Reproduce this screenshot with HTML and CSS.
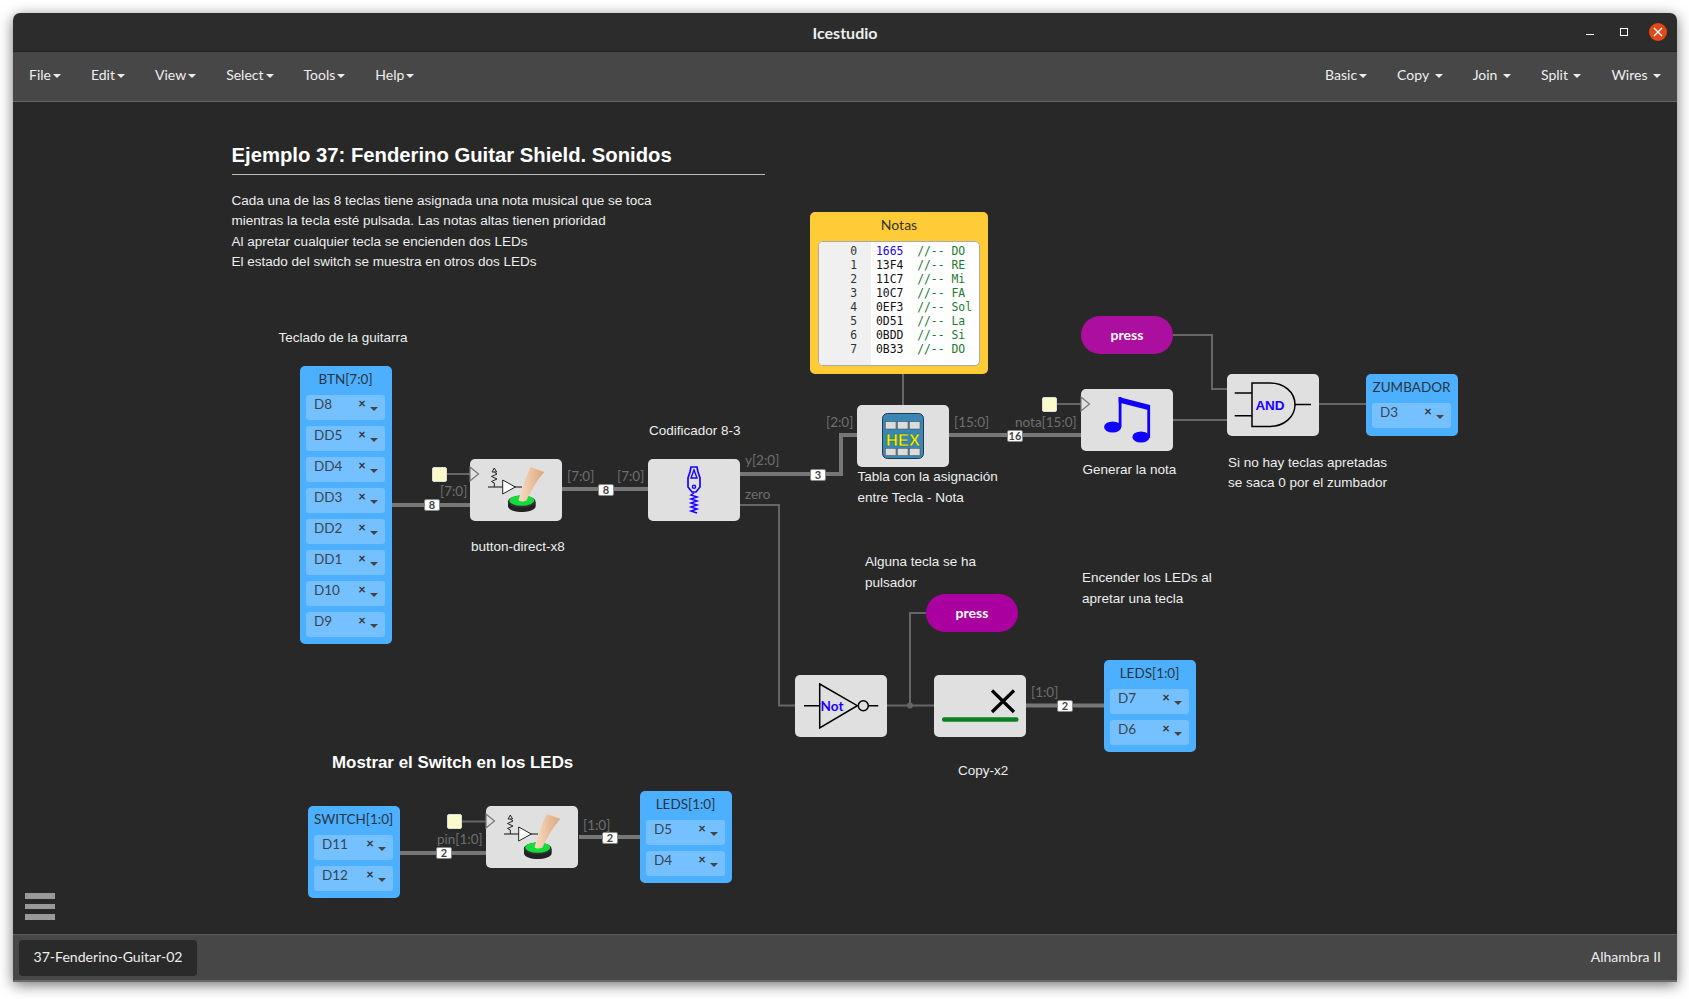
FILE: index.html
```html
<!DOCTYPE html>
<html lang="en">
<head>
  <meta charset="UTF-8">
  <title>Icestudio</title>
  <link rel="stylesheet" href="styles.css">
</head>
<body>
  <div class="window">
    <header class="titlebar">
      <span class="app-title">Icestudio</span>
      <div class="win-controls">
        <span class="win-min"></span>
        <span class="win-max"></span>
        <span class="win-close">
          <svg width="10" height="10" viewBox="0 0 10 10"><path d="M1 1L9 9M9 1L1 9" stroke="#fff" stroke-width="1.4"/></svg>
        </span>
      </div>
    </header>

    <nav class="menubar">
      <ul class="menu">
        <li>File<i class="caret"></i></li>
        <li>Edit<i class="caret"></i></li>
        <li>View<i class="caret"></i></li>
        <li>Select<i class="caret"></i></li>
        <li>Tools<i class="caret"></i></li>
        <li>Help<i class="caret"></i></li>
      </ul>
      <ul class="menu menu-right">
        <li>Basic<i class="caret"></i></li>
        <li>Copy<i class="caret wide"></i></li>
        <li>Join<i class="caret wide"></i></li>
        <li>Split<i class="caret wide"></i></li>
        <li>Wires<i class="caret wide"></i></li>
      </ul>
    </nav>

    <main class="canvas">
      <!-- wires use page coordinates, hence the viewBox offset -->
      <svg class="wires" viewBox="13 102 1664 832">
        <path class="bus" d="M392 505H470M562 489H648M740 474H841V435H857M949 435H1081M1026 705.5H1104M400 853H486M579 837H640"/>
        <path class="net" d="M447 474H470M740 505H779V705.5H795M887 705.5H934M910 705.5V613H926M903 374V405M1057 404H1081M1173 335H1212V389H1227M1173 420H1227M1319 404H1366M462 821.5H486"/>
        <circle cx="910" cy="705.5" r="3" fill="#666"/>
      </svg>

      <div class="intro">
        <h2>Ejemplo 37: Fenderino Guitar Shield. Sonidos</h2>
        <p>Cada una de las 8 teclas tiene asignada una nota musical que se toca<br>
        mientras la tecla esté pulsada. Las notas altas tienen prioridad<br>
        Al apretar cualquier tecla se encienden dos LEDs<br>
        El estado del switch se muestra en otros dos LEDs</p>
      </div>

      <div class="note note-teclado">Teclado de la guitarra</div>
      <div class="note note-button">button-direct-x8</div>
      <div class="note note-codif">Codificador 8-3</div>
      <div class="note note-tabla">Tabla con la asignación<br>entre Tecla - Nota</div>
      <div class="note note-generar">Generar la nota</div>
      <div class="note note-si">Si no hay teclas apretadas<br>se saca 0 por el zumbador</div>
      <div class="note note-alguna">Alguna tecla se ha<br>pulsador</div>
      <div class="note note-encender">Encender los LEDs al<br>apretar una tecla</div>
      <div class="note note-copy">Copy-x2</div>
      <h3 class="note-mostrar">Mostrar el Switch en los LEDs</h3>

      <!-- input / output pins -->
      <div class="pins pins-btn">
        <div class="pins-name">BTN[7:0]</div>
        <div class="pin"><span>D8</span><b>×</b><i class="caret"></i></div>
        <div class="pin"><span>DD5</span><b>×</b><i class="caret"></i></div>
        <div class="pin"><span>DD4</span><b>×</b><i class="caret"></i></div>
        <div class="pin"><span>DD3</span><b>×</b><i class="caret"></i></div>
        <div class="pin"><span>DD2</span><b>×</b><i class="caret"></i></div>
        <div class="pin"><span>DD1</span><b>×</b><i class="caret"></i></div>
        <div class="pin"><span>D10</span><b>×</b><i class="caret"></i></div>
        <div class="pin"><span>D9</span><b>×</b><i class="caret"></i></div>
      </div>
      <div class="pins pins-zumbador">
        <div class="pins-name">ZUMBADOR</div>
        <div class="pin"><span>D3</span><b>×</b><i class="caret"></i></div>
      </div>
      <div class="pins pins-leds">
        <div class="pins-name">LEDS[1:0]</div>
        <div class="pin"><span>D7</span><b>×</b><i class="caret"></i></div>
        <div class="pin"><span>D6</span><b>×</b><i class="caret"></i></div>
      </div>
      <div class="pins pins-switch">
        <div class="pins-name">SWITCH[1:0]</div>
        <div class="pin"><span>D11</span><b>×</b><i class="caret"></i></div>
        <div class="pin"><span>D12</span><b>×</b><i class="caret"></i></div>
      </div>
      <div class="pins pins-leds2">
        <div class="pins-name">LEDS[1:0]</div>
        <div class="pin"><span>D5</span><b>×</b><i class="caret"></i></div>
        <div class="pin"><span>D4</span><b>×</b><i class="caret"></i></div>
      </div>

      <!-- memory block -->
      <div class="memory">
        <div class="memory-name">Notas</div>
        <div class="editor">
          <pre class="gutter">0
1
2
3
4
5
6
7</pre>
          <pre class="code"><span class="num">1665</span>  <span class="cmt">//-- DO</span>
13F4  <span class="cmt">//-- RE</span>
11C7  <span class="cmt">//-- Mi</span>
10C7  <span class="cmt">//-- FA</span>
0EF3  <span class="cmt">//-- Sol</span>
0D51  <span class="cmt">//-- La</span>
0BDD  <span class="cmt">//-- Si</span>
0B33  <span class="cmt">//-- DO</span></pre>
        </div>
      </div>

      <!-- clocks -->
      <div class="clock clock-a"></div>
      <div class="clock clock-b"></div>
      <div class="clock clock-c"></div>

      <!-- logic blocks -->
      <div class="block block-button">
        <svg viewBox="0 0 92 62">
          <defs>
            <linearGradient id="skin" x1="0" y1="0" x2="1" y2="0">
              <stop offset="0" stop-color="#f8dcc0"/>
              <stop offset="1" stop-color="#dca67e"/>
            </linearGradient>
            <g id="button-icon">
              <polygon class="clk" points="0,8 8.5,15 0,22"/>
              <path d="M18 28H52" stroke="#555" stroke-width="1.6"/>
              <path d="M24.3 13L22 13L24.3 9L26.6 13L24.3 13L27 15L21.5 17.5L27 20L21.5 22.5L24.3 24V28" fill="none" stroke="#222" stroke-width="1"/>
              <polygon points="32.7,21 45.3,28 32.7,35" fill="#fff" stroke="#222" stroke-width="1"/>
              <path d="M38 43V47C38 51 45 53 51.7 53C58 53 65.7 51 65.7 47V43Z" fill="#222"/>
              <ellipse cx="51.7" cy="42.5" rx="13.8" ry="6" fill="#333"/>
              <ellipse cx="51.7" cy="41.5" rx="12.4" ry="5.2" fill="#12dd3a"/>
              <path d="M48.5 41C52 30 56 18 60.7 8L74.3 13C68 20 62 30 56.5 41.5C54 43 50 43 48.5 41Z" fill="url(#skin)"/>
            </g>
          </defs>
          <use href="#button-icon"/>
        </svg>
      </div>

      <div class="block block-encoder">
        <svg viewBox="0 0 92 62" fill="none" stroke="#1a00ff">
          <path d="M43 8H49L50 13L52 19V28L48 33H44L40 28V19L42 13Z" stroke-width="1.7"/>
          <path d="M43 19L46 11L49 19Z" stroke-width="1.4"/>
          <circle cx="46" cy="27.7" r="1.6" stroke-width="1.4"/>
          <path d="M46 34L43 36L49 38L43 40L49 42L43 44L49 46L43 48L49 50L43 52L49 54" stroke-width="1.5"/>
        </svg>
      </div>

      <div class="block block-hex">
        <svg viewBox="0 0 92 62">
          <rect x="25.5" y="8.5" width="41" height="45" rx="5" fill="#3a87b5" stroke="#1f3a4a"/>
          <g fill="#dcdcdc" stroke="#444" stroke-width=".5">
            <rect x="28.3" y="16.7" width="10.7" height="7.3"/>
            <rect x="40.3" y="16.7" width="10.7" height="7.3"/>
            <rect x="52.3" y="16.7" width="10.7" height="7.3"/>
            <rect x="28.3" y="43.3" width="10.7" height="7.3"/>
            <rect x="40.3" y="43.3" width="10.7" height="7.3"/>
            <rect x="52.3" y="43.3" width="10.7" height="7.3"/>
          </g>
          <text class="hex-text" x="46" y="40.5">HEX</text>
        </svg>
      </div>

      <div class="block block-note">
        <svg viewBox="0 0 92 62" fill="#1000ff">
          <polygon class="clk" points="0,8 8.5,15 0,22"/>
          <ellipse cx="31.7" cy="38" rx="8.6" ry="5.6"/>
          <ellipse cx="60" cy="48" rx="8.6" ry="5.6"/>
          <rect x="37.7" y="8" width="2.8" height="30"/>
          <rect x="66.3" y="16" width="2.8" height="33"/>
          <polygon points="37.7,8 69,16 69,21.5 37.7,13.4"/>
        </svg>
      </div>

      <div class="block block-and">
        <svg viewBox="0 0 92 62" fill="none" stroke="#000" stroke-width="1.5">
          <path d="M25 9H43C57 9 68 18 68 30.5C68 43 57 52.5 43 52.5H25Z"/>
          <path d="M7.7 19H25M7.7 41.7H25M68 30.5H84"/>
          <text class="gate-text" x="43" y="35.5">AND</text>
        </svg>
      </div>

      <div class="block block-not">
        <svg viewBox="0 0 92 62" fill="none" stroke="#000" stroke-width="1.5">
          <polygon points="24.7,9 62.3,30.7 24.7,53"/>
          <circle cx="68.3" cy="30.7" r="5"/>
          <path d="M9 30.7H24.7M73.3 30.7H83.3"/>
          <text class="gate-text gate-not" x="37" y="35.5">Not</text>
        </svg>
      </div>

      <div class="block block-copy">
        <svg viewBox="0 0 92 62">
          <path d="M58 15.5L80 37M80 15.5L58 37" stroke="#000" stroke-width="3.2"/>
          <rect x="8" y="42.3" width="76.5" height="4.4" rx="2" fill="#0a8020"/>
        </svg>
      </div>

      <div class="block block-button2">
        <svg viewBox="0 0 92 62"><use href="#button-icon"/></svg>
      </div>

      <div class="press press-a">press</div>
      <div class="press press-b">press</div>

      <!-- wire labels -->
      <span class="port p1">[7:0]</span>
      <span class="port p2">[7:0]</span>
      <span class="port p3">[7:0]</span>
      <span class="port p4">y[2:0]</span>
      <span class="port p5">zero</span>
      <span class="port p6">[2:0]</span>
      <span class="port p7">[15:0]</span>
      <span class="port p8">nota[15:0]</span>
      <span class="port p9">[1:0]</span>
      <span class="port p10">pin[1:0]</span>
      <span class="port p11">[1:0]</span>

      <span class="size s1">8</span>
      <span class="size s2">8</span>
      <span class="size s3">3</span>
      <span class="size s4">16</span>
      <span class="size s5">2</span>
      <span class="size s6">2</span>
      <span class="size s7">2</span>

      <div class="hamburger"><span></span><span></span><span></span></div>
    </main>

    <footer class="statusbar">
      <div class="tab">37-Fenderino-Guitar-02</div>
      <div class="board-name">Alhambra II</div>
    </footer>
  </div>
</body>
</html>
```

FILE: styles.css
```css
* {
  box-sizing: border-box;
}

html, body {
  margin: 0;
  height: 999px;
  overflow: hidden;
}

body {
  background: #fff;
  padding: 13px 12px 17px 13px;
  font-family: Lato, sans-serif;
  font-size: 14px;
}

.window {
  height: 100%;
  display: flex;
  flex-direction: column;
  border-radius: 7px 7px 0 0;
  overflow: hidden;
  box-shadow: 0 3px 14px rgba(0, 0, 0, 0.55);
}

/* title bar */
.titlebar {
  height: 38px;
  background: #2c2c2c;
  display: flex;
  align-items: center;
  justify-content: center;
  position: relative;
  color: #eee;
}

.app-title {
  font-weight: bold;
  font-size: 16px;
}

.win-controls {
  position: absolute;
  right: 10px;
  top: 10px;
  display: flex;
  align-items: center;
  gap: 26px;
}

.win-min {
  width: 8px;
  height: 1px;
  margin-top: 4px;
  background: #fff;
}

.win-max {
  width: 8px;
  height: 8px;
  border: 1px solid #fff;
  margin-top: -1px;
}

.win-close {
  width: 18px;
  height: 18px;
  margin-left: -5px;
  border-radius: 50%;
  background: #e2491a;
  display: flex;
  align-items: center;
  justify-content: center;
}

/* menu */
.menubar {
  height: 51px;
  background: #474747;
  border-top: 1px solid #222;
  border-bottom: 1px solid #666;
  display: flex;
  justify-content: space-between;
  padding: 0 1px 4px;
  color: #eee;
}

.menu {
  list-style: none;
  margin: 0;
  padding: 0;
  display: flex;
  align-items: center;
}

.menu li {
  padding: 0 15px;
}

.caret {
  display: inline-block;
  width: 0;
  height: 0;
  margin-left: 2px;
  vertical-align: middle;
  border-top: 4px solid currentColor;
  border-left: 4px solid transparent;
  border-right: 4px solid transparent;
}

.caret.wide {
  margin-left: 5.5px;
}

/* canvas */
.canvas {
  flex: 1;
  position: relative;
  background: #282828;
  overflow: hidden;
  color: #eee;
}

.wires {
  position: absolute;
  left: 0;
  top: 0;
  width: 1664px;
  height: 832px;
}

.bus {
  fill: none;
  stroke: #777;
  stroke-width: 4;
}

.net {
  fill: none;
  stroke: #666;
  stroke-width: 2;
}

/* text notes */
.intro {
  position: absolute;
  left: 218.5px;
  top: 41px;
  width: 533px;
  font-family: "Liberation Sans", Arial, sans-serif;
}

.intro h2 {
  margin: 0;
  font-size: 20.27px;
  line-height: 24px;
  padding-bottom: 7px;
  border-bottom: 1px solid #bbb;
  color: #fff;
}

.intro p {
  margin: 16px 0 0;
  font-size: 13.52px;
  line-height: 20.33px;
}

.note {
  position: absolute;
  font-family: "Liberation Sans", Arial, sans-serif;
  font-size: 13.5px;
  line-height: 21px;
  white-space: nowrap;
}

.note-teclado { left: 265.5px; top: 225px; }
.note-button { left: 458px; top: 434px; }
.note-codif { left: 636px; top: 318px; }
.note-tabla { left: 844.5px; top: 364px; }
.note-generar { left: 1069.5px; top: 357px; }
.note-si { left: 1215px; top: 351px; line-height: 20px; }
.note-alguna { left: 852px; top: 449px; }
.note-encender { left: 1069px; top: 465px; }
.note-copy { left: 945px; top: 658px; }

.note-mostrar {
  position: absolute;
  left: 319px;
  top: 651px;
  margin: 0;
  font-family: "Liberation Sans", Arial, sans-serif;
  font-size: 16.9px;
  line-height: 20px;
  color: #fff;
  white-space: nowrap;
}

/* pin blocks */
.pins {
  position: absolute;
  width: 92px;
  padding: 0 7px 7px 6px;
  background: #4cb0ff;
  border-radius: 5px;
  display: flex;
  flex-direction: column;
  gap: 6px;
  color: #333;
}

.pins-btn { left: 287px; top: 264px; }
.pins-zumbador { left: 1353px; top: 272px; height: 62px; }
.pins-leds { left: 1091px; top: 558px; }
.pins-switch { left: 295px; top: 704px; }
.pins-leds2 { left: 627px; top: 689px; }

.pins-name {
  height: 23px;
  line-height: 26px;
  font-size: 13.5px;
  text-align: center;
  white-space: nowrap;
  margin: 0 -6px;
  color: #2a3440;
}

.pin {
  height: 25px;
  display: flex;
  padding: 0 7px 0 8px;
  background: #75c0ff;
  border-radius: 3px;
  font-size: 13.5px;
  line-height: 18px;
  color: #3a4450;
}

.pin span {
  flex: 1;
}

.pin b {
  width: 8px;
  text-align: center;
  font-weight: bold;
  font-size: 13px;
  line-height: 17px;
  color: #333;
}

.pin .caret {
  margin: 12px 0 0 4px;
  border-top-width: 4.5px;
  color: #444;
}

/* memory block */
.memory {
  position: absolute;
  left: 797px;
  top: 110px;
  width: 178px;
  height: 162px;
  background: #ffcb36;
  border-radius: 5px;
  padding: 0 8px 8px;
  color: #333;
}

.memory-name {
  height: 29px;
  line-height: 26px;
  text-align: center;
}

.editor {
  height: 125px;
  display: flex;
  background: #fff;
  border: 1px solid #aaa;
  border-radius: 5px;
  overflow: hidden;
  font-family: "DejaVu Sans Mono", monospace;
  font-size: 11.4px;
  line-height: 14px;
}

.editor pre {
  margin: 0;
  font: inherit;
}

.gutter {
  width: 52px;
  padding: 2px 14px 0 0;
  text-align: right;
  background: #f0f0f0;
  color: #333;
}

.code {
  padding: 2px 0 0 5px;
  color: #111;
}

.num {
  color: #1a00e8;
}

.cmt {
  color: #1a7a30;
}

/* clocks */
.clock {
  position: absolute;
  width: 15px;
  height: 15px;
  background: #fbfbca;
  border: 1px solid #ddd;
  border-radius: 2px;
}

.clock-a { left: 419px; top: 365px; }
.clock-b { left: 1029px; top: 295px; }
.clock-c { left: 434px; top: 712px; }

/* logic blocks */
.block {
  position: absolute;
  width: 92px;
  height: 62px;
  background: #e0e0e0;
  border-radius: 5px;
}

.block svg {
  display: block;
  width: 92px;
  height: 62px;
  overflow: visible;
}

.block-button { left: 457px; top: 357px; }
.block-encoder { left: 635px; top: 357px; }
.block-hex { left: 844px; top: 303px; }
.block-note { left: 1068px; top: 287px; }
.block-and { left: 1214px; top: 272px; }
.block-not { left: 782px; top: 573px; }
.block-copy { left: 921px; top: 573px; }
.block-button2 { left: 473px; top: 704px; }

.clk {
  fill: #e0e0e0;
  stroke: #777;
  stroke-width: 1.2;
}

.hex-text {
  font-family: "Liberation Sans", Arial, sans-serif;
  font-weight: bold;
  font-size: 16.5px;
  text-anchor: middle;
  fill: #f8f000;
  stroke: #1c5a3a;
  stroke-width: 0.4;
}

.gate-text {
  font-family: "Liberation Sans", Arial, sans-serif;
  font-weight: bold;
  font-size: 13.5px;
  text-anchor: middle;
  fill: #1a00ff;
  stroke: none;
}

.gate-not {
  font-family: Lato, sans-serif;
  font-size: 13.5px;
}

/* constant pills */
.press {
  position: absolute;
  width: 92px;
  height: 38px;
  border-radius: 19px;
  text-align: center;
  line-height: 38px;
  font-weight: bold;
  color: #fff;
}

.press-a { left: 1068px; top: 214px; background: #ac0ea0; }
.press-b { left: 913px; top: 492px; background: #aa00a0; }

/* wire labels */
.port {
  position: absolute;
  font-size: 13.5px;
  line-height: 18px;
  color: #6e6e6e;
  white-space: nowrap;
}

.p1 { left: 427px; top: 380px; }
.p2 { left: 554px; top: 365px; }
.p3 { left: 604px; top: 365px; }
.p4 { left: 732px; top: 349px; }
.p5 { left: 732px; top: 383px; }
.p6 { left: 813px; top: 311px; }
.p7 { left: 941px; top: 311px; }
.p8 { left: 1002px; top: 311px; }
.p9 { left: 1018px; top: 581px; }
.p10 { left: 424px; top: 728px; }
.p11 { left: 570px; top: 714px; }

.size {
  position: absolute;
  width: 16px;
  height: 12px;
  background: #fff;
  border: 1px solid #888;
  border-radius: 2px;
  text-align: center;
  font-size: 11px;
  font-weight: bold;
  line-height: 10px;
  color: #444;
}

.s1 { left: 411px; top: 397px; }
.s2 { left: 585px; top: 382px; }
.s3 { left: 797px; top: 367px; }
.s4 { left: 994px; top: 328px; }
.s5 { left: 1044px; top: 598px; }
.s6 { left: 423px; top: 745px; }
.s7 { left: 589px; top: 730px; }

.hamburger {
  position: absolute;
  left: 12px;
  top: 791px;
  width: 30px;
  display: flex;
  flex-direction: column;
  gap: 5px;
}

.hamburger span {
  height: 5.5px;
  background: #999;
}

/* status bar */
.statusbar {
  height: 48px;
  background: #474747;
  border-top: 1px solid #5a5a5a;
  border-bottom: 2px solid #6a6a6a;
  display: flex;
  align-items: center;
  justify-content: space-between;
  padding: 0 16px 0 6px;
  color: #eee;
}

.tab {
  width: 178px;
  height: 36px;
  line-height: 34px;
  text-align: center;
  background: #2a2a2a;
  border-radius: 4px;
  font-size: 14.1px;
}

.board-name {
  margin-top: -2px;
}
```
